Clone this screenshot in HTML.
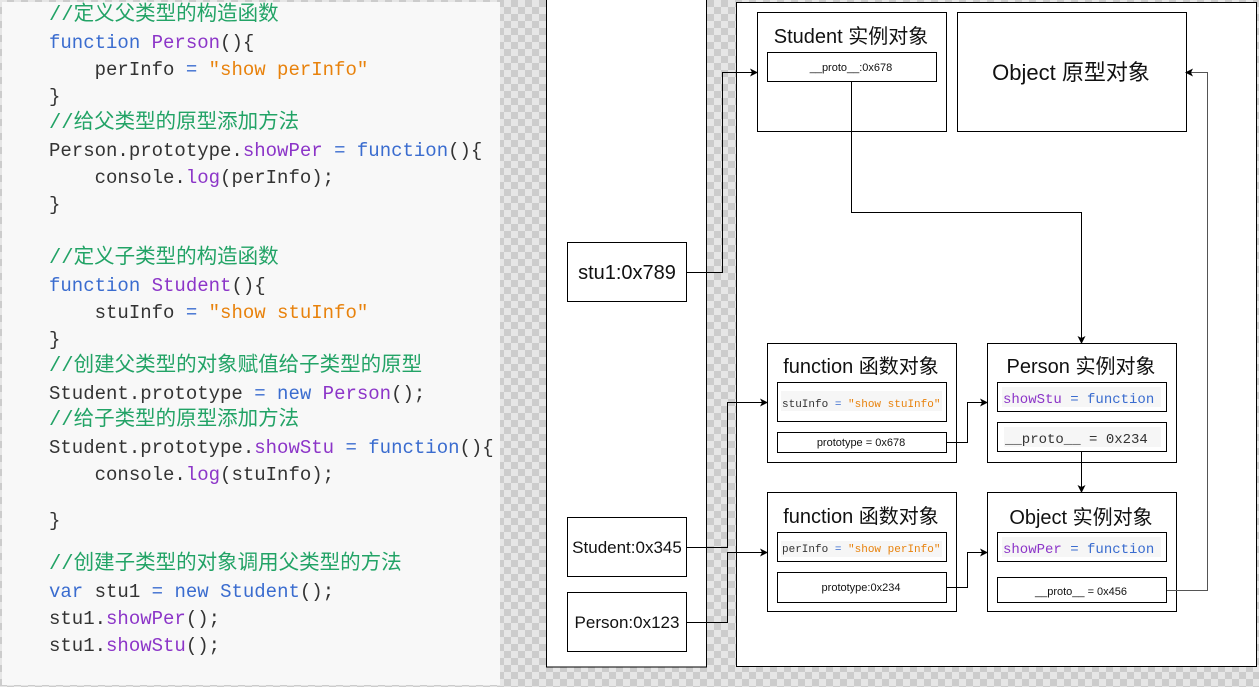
<!DOCTYPE html>
<html><head><meta charset="utf-8"><style>
*{margin:0;padding:0}
body{width:1259px;height:687px;overflow:hidden;position:relative;
background-color:#e6e6e6;
background-image:linear-gradient(45deg,#ccc 25%,transparent 25%,transparent 75%,#ccc 75%),linear-gradient(45deg,#ccc 25%,transparent 25%,transparent 75%,#ccc 75%);
background-size:14px 14px;background-position:0 0,7px 7px;}
#code{position:absolute;left:2px;top:2px;width:498px;height:683px;background:#f8f8f8;}
.l{position:absolute;left:47px;white-space:pre;font:19px "Liberation Mono","Noto Sans CJK SC",monospace;color:#333;line-height:22px}
.c{color:#22a366;font-size:20.5px;font-family:"Liberation Mono","Noto Sans CJK SC",monospace}
.k{color:#3a6ccf}.p{color:#8c35c8}.s{color:#e8820c}
svg{position:absolute;left:0;top:0}
</style></head><body>
<div id="code">
<div class="l" style="top:2px"><span class="c">//定义父类型的构造函数</span></div>
<div class="l" style="top:30px"><span class="k">function</span> <span class="p">Person</span>(){</div>
<div class="l" style="top:57px">    perInfo <span class="k">=</span> <span class="s">"show perInfo"</span></div>
<div class="l" style="top:84px">}</div>
<div class="l" style="top:110px"><span class="c">//给父类型的原型添加方法</span></div>
<div class="l" style="top:138px">Person.prototype.<span class="p">showPer</span> <span class="k">=</span> <span class="k">function</span>(){</div>
<div class="l" style="top:165px">    console.<span class="p">log</span>(perInfo);</div>
<div class="l" style="top:192px">}</div>
<div class="l" style="top:245px"><span class="c">//定义子类型的构造函数</span></div>
<div class="l" style="top:273px"><span class="k">function</span> <span class="p">Student</span>(){</div>
<div class="l" style="top:300px">    stuInfo <span class="k">=</span> <span class="s">"show stuInfo"</span></div>
<div class="l" style="top:327px">}</div>
<div class="l" style="top:353px"><span class="c">//创建父类型的对象赋值给子类型的原型</span></div>
<div class="l" style="top:381px">Student.prototype <span class="k">=</span> <span class="k">new</span> <span class="p">Person</span>();</div>
<div class="l" style="top:407px"><span class="c">//给子类型的原型添加方法</span></div>
<div class="l" style="top:435px">Student.prototype.<span class="p">showStu</span> <span class="k">=</span> <span class="k">function</span>(){</div>
<div class="l" style="top:462px">    console.<span class="p">log</span>(stuInfo);</div>
<div class="l" style="top:508px">}</div>
<div class="l" style="top:551px"><span class="c">//创建子类型的对象调用父类型的方法</span></div>
<div class="l" style="top:579px"><span class="k">var</span> stu1 <span class="k">=</span> <span class="k">new</span> <span class="k">Student</span>();</div>
<div class="l" style="top:606px">stu1.<span class="p">showPer</span>();</div>
<div class="l" style="top:633px">stu1.<span class="p">showStu</span>();</div>
</div>
<svg width="1259" height="687" xmlns="http://www.w3.org/2000/svg" font-family="Liberation Sans, Noto Sans CJK SC, sans-serif">
<defs><marker id="a" markerWidth="8" markerHeight="8" refX="7" refY="4" orient="auto" markerUnits="userSpaceOnUse"><path d="M0,0 L8,4 L0,8 L2,4z" fill="#000"/></marker></defs>
<g fill="#fff" stroke="#000" stroke-width="1">
<rect x="546.5" y="-1" width="160" height="668"/>
<rect x="736.5" y="2.5" width="520" height="664"/>
<rect x="757.5" y="12.5" width="189" height="119"/>
<rect x="767.5" y="52.5" width="169" height="29"/>
<rect x="957.5" y="12.5" width="229" height="119"/>
<rect x="567.5" y="242.5" width="119" height="59"/>
<rect x="767.5" y="343.5" width="189" height="119"/>
<rect x="777.5" y="382.5" width="169" height="39"/>
<rect x="777.5" y="432.5" width="169" height="20"/>
<rect x="987.5" y="343.5" width="189" height="119"/>
<rect x="997.5" y="382.5" width="169" height="29"/>
<rect x="997.5" y="422.5" width="169" height="29"/>
<rect x="767.5" y="492.5" width="189" height="119"/>
<rect x="777.5" y="532.5" width="169" height="29"/>
<rect x="777.5" y="572.5" width="169" height="30"/>
<rect x="987.5" y="492.5" width="189" height="119"/>
<rect x="997.5" y="532.5" width="169" height="29"/>
<rect x="997.5" y="577.5" width="169" height="25"/>
<rect x="567.5" y="517.5" width="119" height="59"/>
<rect x="567.5" y="592.5" width="119" height="59"/>
</g>
<g fill="#f6f6f6"><rect x="781" y="391" width="161" height="20"/><rect x="781" y="541" width="161" height="16"/><rect x="1002" y="387" width="159" height="20"/><rect x="1004" y="427" width="157" height="20"/><rect x="1002" y="537" width="159" height="20"/></g>
<g fill="none" stroke="#000" stroke-width="1">
<path d="M687,272.5H722.5V72.5H757" marker-end="url(#a)"/>
<path d="M851.5,82V212.5H1081.5V343" marker-end="url(#a)"/>
<path d="M1081.5,452V492" marker-end="url(#a)"/>
<path d="M947,442.5H967.5V402.5H987" marker-end="url(#a)"/>
<path d="M947,587.5H967.5V552.5H987" marker-end="url(#a)"/>
<path d="M687,547.5H727.5V402.5H767" marker-end="url(#a)"/>
<path d="M687,622.5H727.5V552.5H767" marker-end="url(#a)"/>
<path d="M1167,590.5H1207.5V72.5H1186" stroke="#555" marker-end="url(#a)"/>
</g>
<g text-anchor="middle" fill="#111">
<text x="851" y="43" font-size="20">Student 实例对象</text>
<text x="851" y="71" font-size="11">__proto__:0x678</text>
<text x="1071" y="80" font-size="22">Object 原型对象</text>
<text x="627" y="279" font-size="20">stu1:0x789</text>
<text x="861" y="373" font-size="20">function 函数对象</text>
<text x="861" y="446" font-size="11">prototype = 0x678</text>
<text x="1081" y="373" font-size="20">Person 实例对象</text>
<text x="861" y="523" font-size="20">function 函数对象</text>
<text x="861" y="591" font-size="11">prototype:0x234</text>
<text x="1081" y="524" font-size="20">Object 实例对象</text>
<text x="1081" y="595" font-size="11">__proto__ = 0x456</text>
<text x="627" y="553" font-size="17">Student:0x345</text>
<text x="627" y="628" font-size="17">Person:0x123</text>
</g>
<g font-family="Liberation Mono, monospace">
<text x="782" y="407" font-size="11" fill="#333">stuInfo <tspan fill="#3a6ccf">=</tspan> <tspan fill="#e8820c">"show stuInfo"</tspan></text>
<text x="782" y="552" font-size="11" fill="#333">perInfo <tspan fill="#3a6ccf">=</tspan> <tspan fill="#e8820c">"show perInfo"</tspan></text>
<text x="1003" y="403" font-size="14" fill="#8c35c8">showStu <tspan fill="#3a6ccf">= function</tspan></text>
<text x="1005" y="443" font-size="14" fill="#333">__proto__ = 0x234</text>
<text x="1003" y="553" font-size="14" fill="#8c35c8">showPer <tspan fill="#3a6ccf">= function</tspan></text>
</g>
</svg>
</body></html>
